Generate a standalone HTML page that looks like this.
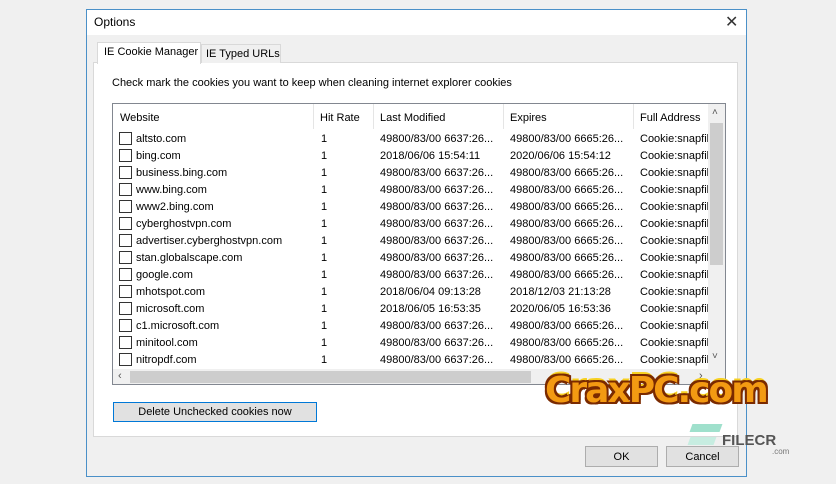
<!DOCTYPE html>
<html><head><style>
*{margin:0;padding:0;box-sizing:border-box}
body{width:836px;height:484px;background:#f0f0f0;font-family:"Liberation Sans",sans-serif;font-size:11px;color:#000;position:relative;overflow:hidden}
.a{position:absolute}
.row{position:absolute;left:0;height:17px;width:596px}
.row span{position:absolute;top:3px;white-space:nowrap}
.cb{position:absolute;left:6px;top:2px;width:13px;height:13px;border:1px solid #333;background:#fff}
</style></head><body>
<div class="a" style="left:86px;top:9px;width:661px;height:468px;border:1px solid #4a90c8;background:#f0f0f0"></div>
<div class="a" style="left:87px;top:10px;width:659px;height:25px;background:#fff"></div>
<div class="a" style="left:94px;top:15px;font-size:12px">Options</div>
<div class="a" style="left:725px;top:12px;font-size:16px;color:#333;font-family:'DejaVu Sans',sans-serif;font-weight:200">✕</div>
<!-- tabs -->
<div class="a" style="left:93px;top:62px;width:645px;height:375px;background:#fff;border:1px solid #d9d9d9"></div>
<div class="a" style="left:201px;top:44px;width:80px;height:19px;background:#f0f0f0;border:1px solid #d9d9d9;border-bottom:none"></div>
<div class="a" style="left:206px;top:48px">IE Typed URLs</div>
<div class="a" style="left:97px;top:42px;width:104px;height:22px;background:#fff;border:1px solid #d9d9d9;border-bottom:none"></div>
<div class="a" style="left:104px;top:46px">IE Cookie Manager</div>
<div class="a" style="left:112px;top:77px">Check mark the cookies you want to keep when cleaning internet explorer cookies</div>
<!-- list -->
<div class="a" style="left:112px;top:103px;width:614px;height:282px;border:1px solid #828790;background:#fff;overflow:hidden">
 <div class="a" style="left:0;top:0;width:596px;height:25px">
  <span class="a" style="left:7px;top:8px">Website</span>
  <div class="a" style="left:200px;top:0;width:1px;height:25px;background:#e5e5e5"></div>
  <span class="a" style="left:207px;top:8px">Hit Rate</span>
  <div class="a" style="left:260px;top:0;width:1px;height:25px;background:#e5e5e5"></div>
  <span class="a" style="left:267px;top:8px">Last Modified</span>
  <div class="a" style="left:390px;top:0;width:1px;height:25px;background:#e5e5e5"></div>
  <span class="a" style="left:397px;top:8px">Expires</span>
  <div class="a" style="left:520px;top:0;width:1px;height:25px;background:#e5e5e5"></div>
  <span class="a" style="left:527px;top:8px">Full Address</span>
 </div>
 <div id="rows" class="a" style="left:0;top:26px;width:596px;height:240px"></div>
 <!-- vscroll -->
 <div class="a" style="left:595px;top:0;width:17px;height:265px;background:#f0f0f0"></div>
 <div class="a" style="left:597px;top:19px;width:13px;height:142px;background:#cdcdcd"></div>
 <div class="a" style="left:599px;top:3px;font-size:10px;color:#555">˄</div>
 <div class="a" style="left:599px;top:247px;font-size:10px;color:#555">˅</div>
 <!-- hscroll -->
 <div class="a" style="left:0;top:265px;width:612px;height:16px;background:#f0f0f0"></div>
 <div class="a" style="left:17px;top:267px;width:401px;height:12px;background:#cdcdcd"></div>
 <div class="a" style="left:5px;top:266px;font-size:11px;color:#555">‹</div>
 <div class="a" style="left:586px;top:266px;font-size:11px;color:#555">›</div>
</div>
<!-- buttons -->
<div class="a" style="left:113px;top:402px;width:204px;height:20px;border:1px solid #0078d7;background:#e1e1e1;text-align:center;line-height:19px">Delete Unchecked cookies now</div>
<div class="a" style="left:585px;top:446px;width:73px;height:21px;border:1px solid #adadad;background:#e1e1e1;text-align:center;line-height:21px">OK</div>
<div class="a" style="left:666px;top:446px;width:73px;height:21px;border:1px solid #adadad;background:#e1e1e1;text-align:center;line-height:21px">Cancel</div>
<!-- watermarks -->
<div class="a" style="left:545px;top:370px;font-family:'DejaVu Sans',sans-serif;font-weight:bold;font-size:36px;color:#f39a12;letter-spacing:-2px;text-shadow:-2px -2px 0 #7a2a00,2px -2px 0 #7a2a00,-2px 2px 0 #7a2a00,2px 2px 0 #7a2a00,0 -4px 0 #f7d020">CraxPC.com</div>
<div class="a" style="left:691px;top:424px;width:30px;height:8px;background:#9fe0cc;transform:skewX(-20deg)"></div>
<div class="a" style="left:689px;top:437px;width:26px;height:8px;background:#c7ede1;transform:skewX(-20deg)"></div>
<div class="a" style="left:722px;top:432px;font-weight:bold;font-size:15px;color:#555">FILECR</div>
<div class="a" style="left:772px;top:447px;font-size:8px;color:#777">.com</div>
<script>
var d=[["altsto.com",0],["bing.com",["2018/06/06 15:54:11","2020/06/06 15:54:12"]],["business.bing.com",0],["www.bing.com",0],["www2.bing.com",0],["cyberghostvpn.com",0],["advertiser.cyberghostvpn.com",0],["stan.globalscape.com",0],["google.com",0],["mhotspot.com",["2018/06/04 09:13:28","2018/12/03 21:13:28"]],["microsoft.com",["2018/06/05 16:53:35","2020/06/05 16:53:36"]],["c1.microsoft.com",0],["minitool.com",0],["nitropdf.com",0]];
var h="";
d.forEach(function(r,i){var lm=r[1]?r[1][0]:"49800/83/00 6637:26...",ex=r[1]?r[1][1]:"49800/83/00 6665:26...";
h+='<div class="row" style="top:'+(i*17)+'px"><div class="cb"></div><span style="left:23px">'+r[0]+'</span><span style="left:208px">1</span><span style="left:267px">'+lm+'</span><span style="left:397px">'+ex+'</span><span style="left:527px">Cookie:snapfil</span></div>';});
document.getElementById("rows").innerHTML=h;
</script>
</body></html>
